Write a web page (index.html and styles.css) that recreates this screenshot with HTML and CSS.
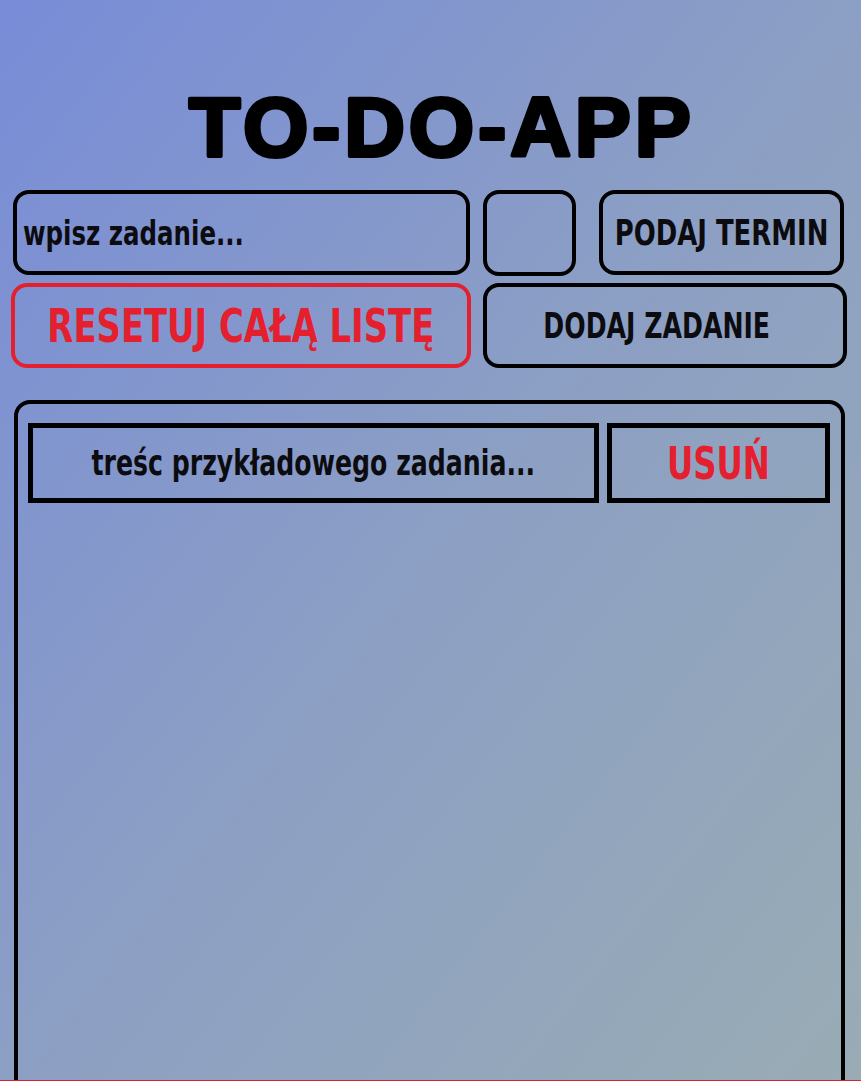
FILE: index.html
```html
<!DOCTYPE html>
<html lang="pl">
<head>
<meta charset="utf-8">
<title>TO-DO-APP</title>
<link rel="stylesheet" href="styles.css">
</head>
<body>
<div class="page">
  <svg class="title" width="861" height="110" viewBox="0 0 861 110">
    <text x="442" y="86" text-anchor="middle" class="title-text">TO-DO-APP</text>
  </svg>
  <div class="row row1">
    <div class="box input"><span class="txt">wpisz zadanie...</span></div>
    <div class="box square"></div>
    <div class="box termin"><span class="txt">PODAJ TERMIN</span></div>
  </div>
  <div class="row row2">
    <div class="box reset"><span class="txt">RESETUJ CAŁĄ LISTĘ</span></div>
    <div class="box dodaj"><span class="txt">DODAJ ZADANIE</span></div>
  </div>
  <div class="list">
    <div class="task">
      <div class="task-text"><span class="txt">treśc przykładowego zadania...</span></div>
      <div class="task-del"><span class="txt">USUŃ</span></div>
    </div>
  </div>
</div>
</body>
</html>
```
FILE: styles.css
```css
* { box-sizing: border-box; }
html, body { margin: 0; padding: 0; }
body {
  background: linear-gradient(to bottom right, #788cd8 0%, #8c9fc4 50%, #99acb4 100%);
  min-height: 1081px;
  font-family: "DejaVu Sans Condensed", "DejaVu Sans", sans-serif;
  font-weight: bold;
  color: #0c0c10;
}
.page {
  height: 1081px;
  border-bottom: 1px solid #e0202e;
  overflow: hidden;
  padding-top: 70px;
}
.title { display: block; }
.title-text {
  font-family: "Liberation Sans", Arial, sans-serif;
  font-weight: bold;
  font-size: 84px;
  letter-spacing: 4px;
  fill: #000;
  stroke: #000;
  stroke-width: 4px;
  stroke-linejoin: round;
}
.row { display: flex; }
.row1 { margin-top: 10px; padding-left: 13px; align-items: flex-start; }
.row2 { margin-top: 7px; padding-left: 11px; }
.box {
  border: 4px solid #000;
  border-radius: 16px;
  height: 85px;
  display: flex;
  align-items: center;
  justify-content: center;
}
.txt {
  white-space: nowrap;
  display: inline-block;
  transform: scaleX(0.8);
}
.input { width: 457px; margin-right: 13px; justify-content: flex-start; padding-left: 6px; font-size: 34px; }
.input .txt { transform-origin: left center; }
.square { width: 93px; height: 86px; margin-right: 23px; }
.termin { width: 245px; font-size: 36px; }
.reset { width: 460px; margin-right: 12px; border-color: #e5202e; color: #e5202e; font-size: 47px; }
.dodaj { width: 364px; font-size: 35px; }
.dodaj .txt { margin-right: 16px; }
.list {
  margin-top: 32px;
  margin-left: 14px;
  width: 831px;
  height: 800px;
  border: 4px solid #000;
  border-radius: 16px 16px 0 0;
  padding: 19px 11px 0 10px;
}
.task { display: flex; gap: 8px; }
.task-text, .task-del {
  height: 80px;
  border: 5px solid #000;
  display: flex;
  align-items: center;
  justify-content: center;
}
.task-text { width: 571px; font-size: 35px; }
.task-del { width: 223px; font-size: 45px; color: #e5202e; }
```
